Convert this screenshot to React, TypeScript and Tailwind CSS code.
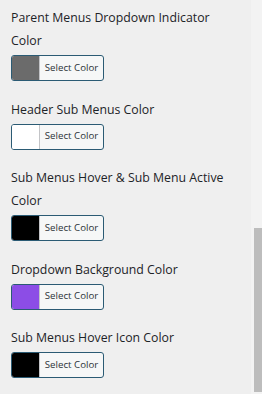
type ColorField = {
  label: string
  color: string
}

const fields: ColorField[] = [
  { label: "Parent Menus Dropdown Indicator Color", color: "#6b6b6b" },
  { label: "Header Sub Menus Color", color: "#ffffff" },
  { label: "Sub Menus Hover & Sub Menu Active Color", color: "#000000" },
  { label: "Dropdown Background Color", color: "#8c4de6" },
  { label: "Sub Menus Hover Icon Color", color: "#000000" },
]

function ColorPicker({ label, color }: ColorField) {
  return (
    <div className="flex flex-col">
      <div className="text-[12.3px] leading-[23px] text-[#1d2327] pr-4">{label}</div>
      <button className="mt-[3px] flex h-[26px] w-[93px] items-stretch overflow-hidden rounded-[3px] border border-[#2b5b74] bg-[#f6f7f7]">
        <span className="w-[28px] border-r border-[#c3c4c7]" style={{ background: color }} />
        <span className="flex flex-1 items-center justify-center text-[9.7px] text-[#2c3338]">
          Select Color
        </span>
      </button>
    </div>
  )
}

export default function App() {
  return (
    <div className="flex h-[394px] w-[262px] overflow-hidden bg-[#efefef]" style={{ fontFamily: '"Open Sans", "Noto Sans", sans-serif' }}>
      <div className="flex flex-1 flex-col gap-[16.5px] pl-[11px] pt-[6px]">
        {fields.map(f => <ColorPicker key={f.label} {...f} />)}
      </div>
      {/* scrollbar */}
      <div className="flex w-[11px] flex-col bg-[#f3f3f3] pl-[3px] pt-[228px] pb-[2px]">
        <div className="flex-1 bg-[#bdbdbd]" />
      </div>
    </div>
  )
}
